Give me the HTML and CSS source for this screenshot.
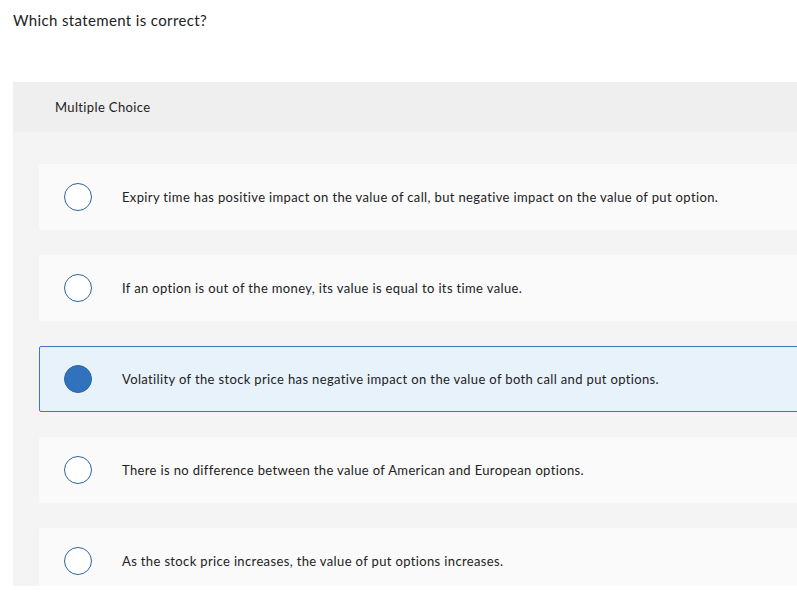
FILE: index.html
```html
<!DOCTYPE html>
<html lang="en">
<head>
    <meta charset="UTF-8">
    <title>Which statement is correct?</title>
    <link rel="stylesheet" href="styles.css">
</head>
<body>
    <div class="question">Which statement is correct?</div>
    <div class="panel">
        <div class="panel-head">Multiple Choice</div>
        <div class="choices">
            <div class="choice">
                <span class="radio"></span>
                <span class="label">Expiry time has positive impact on the value of call, but negative impact on the value of put option.</span>
            </div>
            <div class="choice">
                <span class="radio"></span>
                <span class="label">If an option is out of the money, its value is equal to its time value.</span>
            </div>
            <div class="choice selected">
                <span class="radio"></span>
                <span class="label">Volatility of the stock price has negative impact on the value of both call and put options.</span>
            </div>
            <div class="choice">
                <span class="radio"></span>
                <span class="label">There is no difference between the value of American and European options.</span>
            </div>
            <div class="choice">
                <span class="radio"></span>
                <span class="label">As the stock price increases, the value of put options increases.</span>
            </div>
        </div>
    </div>
</body>
</html>
```

FILE: styles.css
```css
*{margin:0; padding:0; box-sizing:border-box;}
body{
    width: 797px;
    overflow: hidden;
    background: #fff;
    color: #222;
    font-family: "Lato", "Liberation Sans", sans-serif;
    letter-spacing: 0.36px;
}
.question{
    padding: 10px 13px;
    font-size: 15px;
    line-height: 20px;
}
.panel{
    margin: 42px 0 0 13px;
    width: 800px;
    height: 504px;
    overflow: hidden;
    background: #f4f4f4;
}
.panel-head{
    height: 50px;
    line-height: 50px;
    padding-left: 42px;
    font-size: 13px;
    background: #efefef;
}
.choices{
    display: flex;
    flex-direction: column;
    gap: 25px;
    padding: 32px 0 0 26px;
}
.choice{
    display: flex;
    align-items: center;
    gap: 30px;
    width: 780px;
    height: 66px;
    padding-left: 24px;
    background: #fafafa;
    border: 1px solid transparent;
    border-radius: 2px;
    font-size: 13px;
}
.choice .radio{
    flex: none;
    width: 28px;
    height: 28px;
    border-radius: 50%;
    border: 1.5px solid #2b65a4;
    background: #fff;
}
.choice.selected{
    background: #e8f2fb;
    border-color: #3a77c0;
}
.choice.selected .radio{
    background: #3172bd;
    border-color: #2b65a4;
}
```
